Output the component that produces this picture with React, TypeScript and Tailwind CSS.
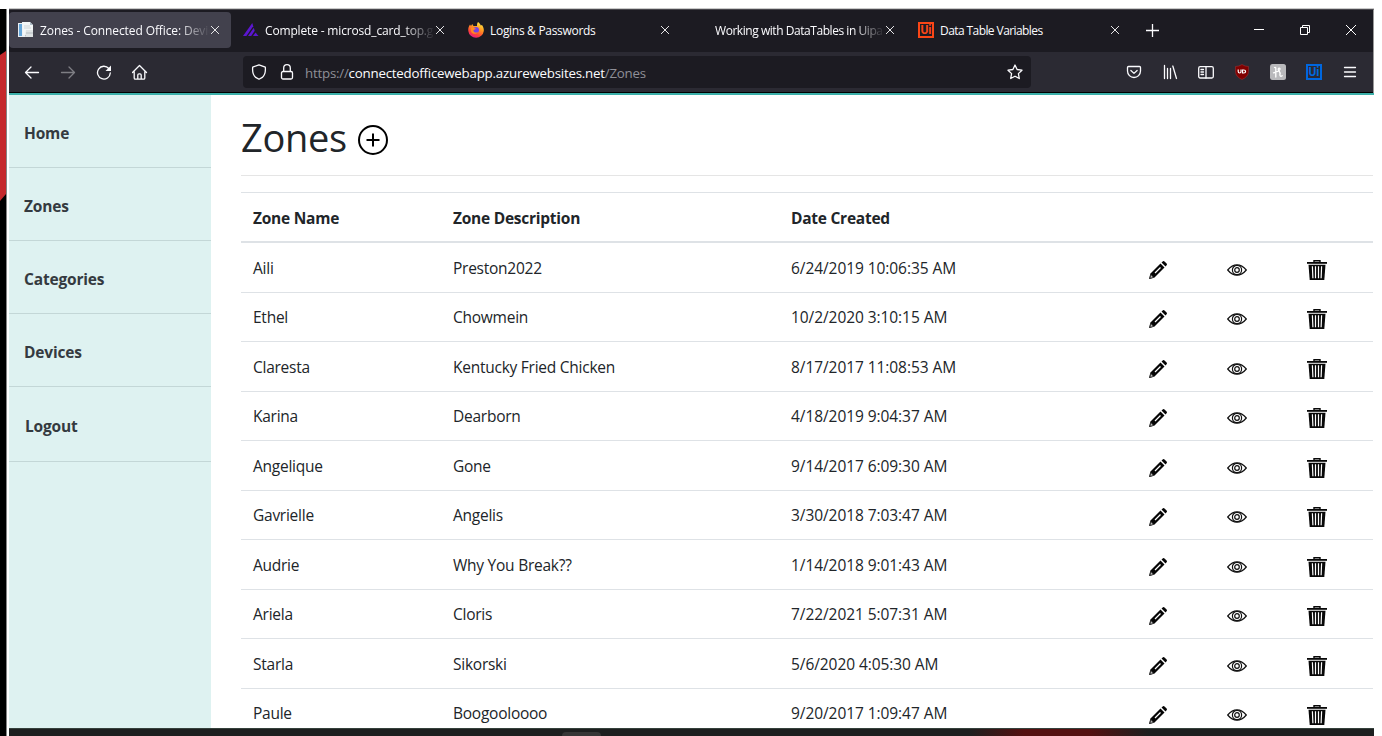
import React from "react";

const zones = [
  ["Aili", "Preston2022", "6/24/2019 10:06:35 AM"],
  ["Ethel", "Chowmein", "10/2/2020 3:10:15 AM"],
  ["Claresta", "Kentucky Fried Chicken", "8/17/2017 11:08:53 AM"],
  ["Karina", "Dearborn", "4/18/2019 9:04:37 AM"],
  ["Angelique", "Gone", "9/14/2017 6:09:30 AM"],
  ["Gavrielle", "Angelis", "3/30/2018 7:03:47 AM"],
  ["Audrie", "Why You Break??", "1/14/2018 9:01:43 AM"],
  ["Ariela", "Cloris", "7/22/2021 5:07:31 AM"],
  ["Starla", "Sikorski", "5/6/2020 4:05:30 AM"],
  ["Paule", "Boogooloooo", "9/20/2017 1:09:47 AM"],
];

function Cross({ className = "" }: { className?: string }) {
  return (
    <svg viewBox="0 0 8 8" className={`size-2 shrink-0 ${className}`} stroke="#e8e8ea" strokeWidth="1" strokeLinecap="round">
      <path d="M.3.3l7.4 7.4M7.7.3L.3 7.7" />
    </svg>
  );
}

function DocIcon() {
  return (
    <svg viewBox="0 0 16 16" className="size-4 shrink-0">
      <path d="M0 1h7v14H0z" fill="#e9eef3" />
      <path d="M1 2h3v12H1z" fill="#64a5d8" />
      <path d="M4 0h8l3 3v10H5z" fill="#f3f6f7" />
      <path d="M12 0l3 3h-3z" fill="#aebdc8" />
      <path d="M6 4h6M6 6h7" stroke="#cfd5d8" />
      <path d="M8 8h7v7H7z" fill="#dfe3e4" />
      <path d="M8 11h7" stroke="#b5bcc0" />
    </svg>
  );
}

function StripesIcon() {
  return (
    <svg viewBox="0 0 16 16" className="size-4 shrink-0" fill="#5b16d0">
      <path d="M0 14L9.300 1l.9 3.200L3.400 14z" />
      <path d="M5 14l5.800-8.300.9 3.100L8.200 14z" />
      <path d="M10 14l2.500-3.600L15.500 14z" />
    </svg>
  );
}

function FirefoxIcon() {
  return (
    <svg viewBox="0 0 16 16" className="size-4 shrink-0">
      <defs>
        <linearGradient id="fox" x1=".8" y1="0" x2=".3" y2="1">
          <stop offset="0" stopColor="#fff04a" />
          <stop offset=".4" stopColor="#ff9a1f" />
          <stop offset=".75" stopColor="#ff4138" />
          <stop offset="1" stopColor="#e5198b" />
        </linearGradient>
      </defs>
      <path d="M10 0c2 1.5 2.4 2.6 2.8 3.6L14 3c1.400 2 2 4 1.800 6A7.800 7.500 0 0 1 .3 9C0 6.500.700 4.500 2 2.600L3 4l1.200-2L5.500 4 9 4C9 2.500 9 1.200 10 0z" fill="url(#fox)" />
      <circle cx="8" cy="8" r="3" fill="#7542e5" />
      <path d="M3 6c2-.8 3 .2 5 .2-1 1.800-3 1-2.500 3 .5 1.500 3 1.800 4.500.8-1 2.500-6 2.500-7-.8z" fill="#ff8a23" />
    </svg>
  );
}

function UiIcon({ blue = false }: { blue?: boolean }) {
  return (
    <span
      className={`flex size-4 shrink-0 items-center justify-center border-2 font-['Roboto',sans-serif] text-[12px] leading-none font-bold ${
        blue ? "border-[#0067df] text-[#0067df]" : "border-[#fa4616] text-[#fa4616]"
      }`}
    >
      Ui
    </span>
  );
}

function Tab({ label, icon, active = false, faded = false, className = "" }: {
  label: string; icon?: React.ReactNode; active?: boolean; faded?: boolean; className?: string;
}) {
  return (
    <div className={`flex h-9 w-[222px] shrink-0 items-center rounded pl-[9px] pr-3 ${active ? "bg-[#42414d]" : ""}`}>
      <span className="mr-[6px] flex size-4 shrink-0">{icon}</span>
      <span
        className={`mt-0.5 min-w-0 flex-1 overflow-hidden text-[12px] leading-5 whitespace-nowrap text-[#fbfbfe] ${
          faded ? "mask-[linear-gradient(to_right,black_calc(100%-32px),transparent)]" : ""
        } ${className}`}
      >
        {label}
      </span>
      <Cross className="ml-px" />
    </div>
  );
}

function TabBar() {
  return (
    <div className="flex h-[42px] shrink-0 items-center bg-[#1c1b22] pb-0.5">
      <div className="flex gap-[3px]">
        <Tab active faded label="Zones - Connected Office: Devic" icon={<DocIcon />} className="tracking-[-0.1px]" />
        <Tab faded label="Complete - microsd_card_top.g" icon={<StripesIcon />} className="tracking-[-0.16px]" />
        <Tab label="Logins & Passwords" icon={<FirefoxIcon />} className="tracking-[-0.3px]" />
        <Tab faded label="Working with DataTables in Uipa" className="tracking-[-0.45px]" />
        <Tab label="Data Table Variables" icon={<UiIcon />} className="tracking-[-0.58px]" />
      </div>
      <svg viewBox="0 0 13 13" className="mt-px ml-[15px] size-[13px]" stroke="#fbfbfe" strokeWidth="1.300"><path d="M6.500 0v13M0 6.500h13" /></svg>
      <svg viewBox="0 0 10 10" className="ml-auto h-2.5 w-2.5" stroke="#fff"><path d="M0 4.500h10" /></svg>
      <svg viewBox="0 0 10 10" className="ml-9 size-2.5" stroke="#fff" fill="none"><path d="M.5 2.500h7v7h-7zM2.500 2.500v-2h7v7h-2" /></svg>
      <svg viewBox="0 0 10 10" className="mr-[17px] ml-9 size-2.5" stroke="#fff"><path d="M0 0l10 10M10 0L0 10" /></svg>
    </div>
  );
}

function Toolbar() {
  const s = { stroke: "#fbfbfe", strokeWidth: 1.3, fill: "none", strokeLinecap: "round" as const, strokeLinejoin: "round" as const };
  return (
    <div className="flex h-[41px] shrink-0 items-center border-b border-black bg-[#2b2a33]">
      <div className="flex w-[234px] items-center gap-5 pl-[15px]">
        <svg viewBox="0 0 16 16" className="size-4" {...s}><path d="M14.500 8.500H1.500M7 3L1.500 8.500 7 14" /></svg>
        <svg viewBox="0 0 16 16" className="size-4 opacity-40" {...s}><path d="M1.500 8.500h13M9 3L14.500 8.500 9 14" /></svg>
        <svg viewBox="0 0 16 16" className="size-4" {...s}><path d="M12.800 4.500A6.400 6.400 0 1 0 14.300 9" /><path d="M15 1.500v5.500H9.500z" fill="#fbfbfe" stroke="none" /></svg>
        <svg viewBox="0 0 16 16" className="size-4" {...s}><path d="M.5 8.500l7-7 7 7M2.200 7.500V14q0 1.200 1.200 1.200h8.200q1.200 0 1.200-1.200V7.500M5.800 15v-4q0-1.200 1.200-1.200h1q1.200 0 1.200 1.200v4" /></svg>
      </div>
      <div className="flex h-8 w-[788px] items-center rounded bg-[#1c1b22] pr-2 pl-2">
        <svg viewBox="0 0 16 16" className="size-4" {...s}><path d="M8 .8l6.300 2.300q.700 7.500-3 10.300L8 15.200l-3.300-1.800Q1 10.600 1.700 3.100z" /></svg>
        <svg viewBox="0 0 16 16" className="ml-3 size-4" {...s}><rect x="2.500" y="7.500" width="11" height="7.500" rx="1.500" /><path d="M4.700 7.200V4a3.300 3.300 0 0 1 6.600 0v3.200" /></svg>
        <span className="mt-[2px] ml-[10px] text-[13.300px] leading-5 tracking-[-0.22px] text-[#8f8f97]">
          https://<span className="text-[#fbfbfe]">connectedofficewebapp.azurewebsites.net</span>/Zones
        </span>
        <svg viewBox="0 0 16 16" className="ml-auto size-4" {...s}><path d="M8 1l2.100 4.500 4.900.7-3.600 3.400.9 4.900L8 12.200l-4.300 2.300.9-4.900L1 6.200l4.900-.7z" /></svg>
      </div>
      <div className="ml-auto flex items-center gap-5 pr-[15px]">
        <svg viewBox="0 0 16 16" className="size-4" {...s}><path d="M2.500 2.500h11q1 0 1 1V7a6.500 6.500 0 0 1-13 0V3.500q0-1 1-1zM4.900 6.500L8 9.400l3.100-2.900" /></svg>
        <svg viewBox="0 0 16 16" className="size-4" {...s}><path d="M2.500 1.500v13M5.500 4.500v10M8.500 4.500v10M10.800 2l3.700 12.500" /></svg>
        <svg viewBox="0 0 16 16" className="size-4" {...s}><rect x=".7" y="2.700" width="14.600" height="11.300" rx="1.500" /><path d="M8 2.700V14M3 5.500h2.500M3 8h2.500M3 10.500h2.500" /></svg>
        <svg viewBox="0 0 16 16" className="size-4"><path d="M8 .5q3 2 6.500 2v5q0 5-6.500 8-6.500-3-6.500-8v-5q3.500 0 6.500-2z" fill="#800000" stroke="#a33" strokeWidth=".5" /><g fill="none" stroke="#fff" strokeWidth="1.200"><path d="M4.200 5.500v2Q4.200 9 5.600 9T7 7.500v-2" /><path d="M8.500 9V6h1.300q1.800 0 1.800 1.500T9.800 9z" /></g></svg>
        <svg viewBox="0 0 16 16" className="size-4"><rect width="16" height="16" rx="2.500" fill="#b9b9bc" /><path d="M5.800 13V4.300Q5.800 3 4.500 3.500M3.500 8.800Q9.800 7 10 5.200 10 3.800 8.800 4.200 7.500 5 9 7q1.500 1.500.9 4 .2 2 2.300.8" fill="none" stroke="#fff" strokeWidth="1.300" strokeLinecap="round" /></svg>
        <UiIcon blue />
        <svg viewBox="0 0 16 16" className="size-4" {...s}><path d="M2.500 3.500h11M2.500 8h11M2.500 12.500h11" /></svg>
      </div>
    </div>
  );
}

function Pencil() {
  return (
    <svg viewBox="0 0 20 20" className="size-5">
      <path d="M1 19l1.500-5.500L12.500 3.500 16.500 7.500 6.500 17.500z" fill="#050505" />
      <path d="M13.500 2.500L15 1.200q.8-.5 1.500.2l2.100 2.100q.7.700.2 1.500L17.500 6.500z" fill="#050505" />
      <path d="M7 13l5.500-5.500" stroke="#fff" strokeWidth="1.200" />
      <path d="M2.600 14.300l3.100 3.100-3.700 1z" fill="#bbb" stroke="#222" strokeWidth=".8" />
    </svg>
  );
}

function Eye() {
  return (
    <svg viewBox="0 0 20 12" className="h-3 w-5" fill="none" stroke="#111" strokeWidth="1.200">
      <path d="M.7 6Q5 .8 10 .8T19.300 6Q15 11.200 10 11.200T.7 6z" />
      <circle cx="10" cy="6" r="4.600" />
      <circle cx="10" cy="6" r="2.300" />
    </svg>
  );
}

function Trash() {
  return (
    <svg viewBox="0 0 20 20" className="size-5">
      <path d="M7 2V.7h6V2" fill="none" stroke="#080808" strokeWidth="1.400" />
      <path d="M0 2h20v1.800H0z" fill="#080808" />
      <path d="M1.500 4.800h17L17.300 20H2.700z" fill="#080808" />
      <path d="M5.400 6.200l.5 12M8.500 6.200v12M11.500 6.200v12M14.600 6.200l-.5 12" stroke="#fff" strokeWidth="1.200" />
    </svg>
  );
}

function Sidebar() {
  return (
    <nav className="w-[202px] shrink-0 bg-[#def2f1] text-[15.500px] leading-6 font-bold tracking-[-0.18px] text-[#343a40]">
      {["Home", "Zones", "Categories", "Devices"].map((n) => (
        <a key={n} className="flex h-[73px] items-center border-b border-[#c3d7d7] pt-[3px] pl-[15px]">{n}</a>
      ))}
      <a className="flex h-[75px] items-center border-b border-[#c3d7d7] pt-[3px] pl-4">Logout</a>
    </nav>
  );
}

function ZoneTable() {
  return (
    <div className="mt-4 border-t border-[#dee2e6]">
      <div className="grid h-[50px] grid-cols-[200px_338px_1fr] items-center border-b-2 border-[#dee2e6] pt-0.5 pl-3 text-[15.500px] leading-6 font-bold tracking-[-0.25px]">
        <span>Zone Name</span><span>Zone Description</span><span>Date Created</span>
      </div>
      {zones.map(([name, description, date], i) => (
        <div
          key={name}
          className={`grid grid-cols-[200px_338px_357px_79px_80px_1fr] items-center border-b border-[#dee2e6] pl-3 text-[15.500px] leading-6 tracking-[-0.25px] ${i % 2 ? "h-[49px]" : "h-[50px]"}`}
        >
          <span className={i % 2 ? "" : "pt-px"}>{name}</span>
          <span className={i % 2 ? "" : "pt-px"}>{description}</span>
          <span className={`tracking-[-0.07px] ${i % 2 ? "" : "pt-px"}`}>{date}</span>
          <span className="pt-1"><Pencil /></span>
          <span className="pt-1"><Eye /></span>
          <span className="pt-1"><Trash /></span>
        </div>
      ))}
    </div>
  );
}

export default function App() {
  return (
    <div className="flex h-[736px] w-[1382px] overflow-hidden bg-white pt-2 font-['Open_Sans','Noto_Sans',sans-serif]">
      <div className="mt-px flex w-1.5 shrink-0 flex-col bg-black">
        <svg viewBox="0 0 7 150" className="mt-[42px] h-[150px] w-1.5" preserveAspectRatio="none"><path d="M0 4l7-4v143l-7 7z" fill="#c5282c" /></svg>
      </div>
      <div className="mt-px mr-0.5 w-px shrink-0 bg-[#858585]" />
      <main className="flex w-[1365px] shrink-0 flex-col">
        <div className="h-px shrink-0 bg-[#c9c9c9]" />
        <div className="flex h-[84px] shrink-0 flex-col border-t border-r border-t-[#48474d] border-r-[#999] bg-[#1c1b22]">
          <TabBar />
          <Toolbar />
        </div>
        <div className="h-0.5 shrink-0 bg-[#3aafa9]" />
        <div className="flex h-[633px] shrink-0 overflow-hidden bg-white">
          <Sidebar />
          <section className="ml-[30px] w-[1132px] shrink-0 text-[#212529]">
            <div className="flex h-[81px] items-center border-b border-[#e5e5e5] pt-1">
              <h1 className="text-[38px] leading-[48px] tracking-[-0.3px]">Zones</h1>
              <svg viewBox="0 0 30 30" className="mt-1.5 ml-[11px] size-[30px]" fill="none" stroke="#000" strokeWidth="2"><circle cx="15" cy="15" r="14" /><path d="M15 8.500v13M8.500 15h13" /></svg>
            </div>
            <ZoneTable />
          </section>
        </div>
        <div className="flex h-2 shrink-0 items-end border-t border-[#35413c] bg-[linear-gradient(to_right,#1d1f1f_0,#1d1f1f_960px,#541010_1015px,#541010_1080px,#1d1f1f_1140px)]">
          <div className="ml-[553px] h-1 w-[39px] rounded-t bg-[#363636]" />
        </div>
      </main>
    </div>
  );
}
